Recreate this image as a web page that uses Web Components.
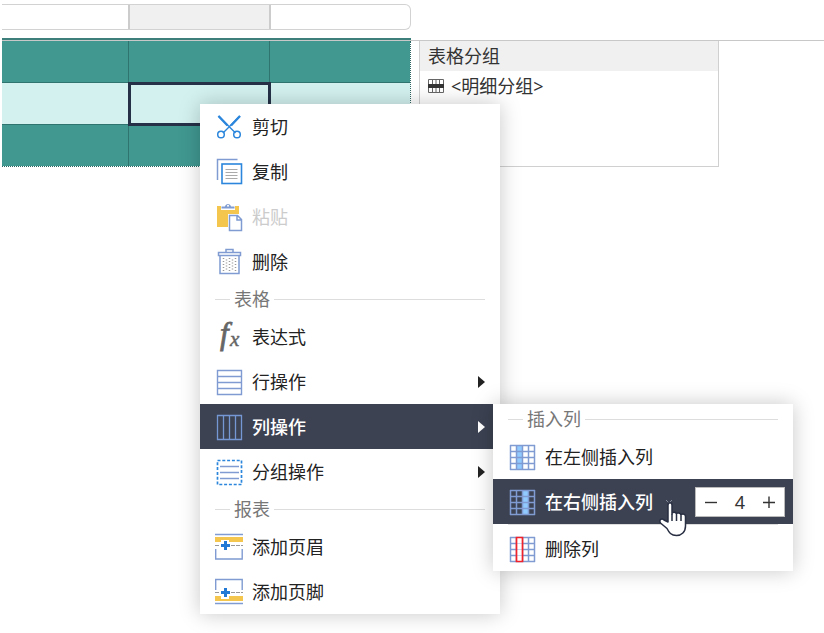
<!DOCTYPE html>
<html lang="zh-CN">
<head>
<meta charset="utf-8">
<meta name="viewport" content="width=device-width, initial-scale=1">
<title>报表设计器</title>
<style>
    body {
        margin: 0;
        min-height: 100vh;
        overflow: hidden;
        background: #fff;
        color: #333;
        font-family: "Noto Sans", "Noto Sans CJK SC", sans-serif;
        font-size: 18px;
        line-height: 30px;
    }
</style>
</head>
<body>

<report-designer>
    <column-ruler slot="ruler"></column-ruler>
    <report-table slot="canvas"></report-table>
    <group-panel slot="canvas" label="表格分组">&lt;明细分组&gt;</group-panel>

    <context-menu slot="menu" class="main" aria-label="表格菜单">
        <menu-item icon="cut">剪切</menu-item>
        <menu-item icon="copy">复制</menu-item>
        <menu-item icon="paste" disabled>粘贴</menu-item>
        <menu-item icon="trash">删除</menu-item>
        <menu-heading>表格</menu-heading>
        <menu-item icon="fx">表达式</menu-item>
        <menu-item icon="rows" submenu>行操作</menu-item>
        <menu-item icon="columns" submenu active>列操作</menu-item>
        <menu-item icon="group" submenu>分组操作</menu-item>
        <menu-heading>报表</menu-heading>
        <menu-item icon="header">添加页眉</menu-item>
        <menu-item icon="footer">添加页脚</menu-item>
    </context-menu>

    <context-menu slot="menu" class="sub" aria-label="列操作">
        <menu-heading>插入列</menu-heading>
        <menu-item icon="insert-left">在左侧插入列</menu-item>
        <menu-item icon="insert-right" active>在右侧插入列<number-stepper slot="end" value="4"></number-stepper></menu-item>
        <menu-divider></menu-divider>
        <menu-item icon="delete-column">删除列</menu-item>
    </context-menu>

    <hand-pointer slot="menu"></hand-pointer>
</report-designer>

<script>
// All icons are drawn on a 28 x 28 grid
const grid = '<path d="M2.5 2v25M8.5 2v25M14.5 2v25M20.5 2v25M26.5 2v25M2 2.5h25M2 8.5h25M2 14.5h25M2 20.5h25M2 26.5h25" stroke="#7f9bd1" stroke-width="1.5"/>';

const icons = {
    'cut': `<g stroke="#2b86dc"><path d="M3.5 3l17 17M25 3L8 20" stroke-width="1.4"/><path d="M3.5 3l9 9.5M25 3l-9 9.5" stroke-width="2.4"/><circle cx="6" cy="21.5" r="3.3" stroke-width="1.5"/><circle cx="22" cy="21.5" r="3.3" stroke-width="1.5"/></g>`,
    'copy': `<path d="M2.5 22V1.5h20" stroke="#7f9bd1" stroke-width="1.5"/><rect x="7" y="6" width="19.5" height="19.5" stroke="#2b86dc" stroke-width="1.6"/><path d="M10.5 11.5h12M10.5 14.5h12M10.5 17.5h12M10.5 20.5h12" stroke="#aaa"/>`,
    'paste': `<path d="M2 3h4v4h14V3h4v8H13v13H2z" fill="#f4c64d"/><path d="M6.5 5.5v-2H10C10.5 0 15.5 0 16 3.5h3.5v2z" fill="#7f9bd1"/><circle cx="13" cy="2.7" r="1" fill="#fff"/><path d="M14.5 12.5h8l4 4v11h-12zM22 12.5V17h4.5" fill="#fff" stroke="#7f9bd1" stroke-width="1.5"/>`,
    'trash': `<g stroke="#7f9bd1" stroke-width="1.5"><path d="M11 4V1.5h7V4M3.5 4.5h22v3h-22zM5 8v17.5h19V8"/></g><path d="M8.5 10v14M14.5 10v14M20.5 10v14" stroke="#999" stroke-width="1.5" stroke-dasharray="1 2"/><path d="M11.5 11.5v12M17.5 11.5v12" stroke="#999" stroke-width="1.5" stroke-dasharray="1 2"/>`,
    'fx': `<g fill="#666" stroke="#666" font-family="Liberation Serif, serif" font-style="italic"><text x="5" y="21" font-size="31" stroke-width=".8">f</text><text x="15" y="23" font-size="21" stroke-width=".5">x</text></g>`,
    'rows': `<path d="M2.5 2.5h24v24h-24zM2 8.5h24M2 14.5h24M2 20.5h24" stroke="#7f9bd1" stroke-width="1.4"/>`,
    'columns': `<path d="M2.5 2.5h24v24h-24zM8.5 3v24M14.5 3v24M20.5 3v24" stroke="#7597d3" stroke-width="1.3"/>`,
    'group': `<rect x="2.5" y="2.5" width="24" height="24" stroke="#2b86dc" stroke-width="1.7" stroke-dasharray="3 1.8"/><path d="M5 8.5h19M5 14.5h19M5 20.5h19" stroke="#7f9bd1" stroke-width="1.4"/>`,
    'header': `<path d="M0 1.5h28" stroke="#7f9bd1" stroke-width="1.5"/><path d="M0 4h28v5H14V7H6v2H0z" fill="#f4c64d"/><path d="M.7 16v10h26.5V16" stroke="#7f9bd1" stroke-width="1.4"/><path d="M0 12.5h5M16 12.5h12" stroke="#999" stroke-dasharray="4 1"/><path d="M10.5 8v9M6 12.5h9" stroke="#2179d5" stroke-width="3"/>`,
    'footer': `<path d="M.7 12V1.5h26.5V12" stroke="#7f9bd1" stroke-width="1.4"/><path d="M0 14.5h5M16 14.5h12" stroke="#999" stroke-dasharray="4 1"/><path d="M0 18h6v3h8v-3h14v5H0z" fill="#f4c64d"/><path d="M0 25.5h28" stroke="#7f9bd1" stroke-width="1.5"/><path d="M10.5 10v9M6 14.5h9" stroke="#2179d5" stroke-width="3"/>`,
    'insert-left': `<path d="M8.5 2.5h6v24h-6z" fill="#90caff"/>${grid}`,
    'insert-right': `<path d="M14.5 2.5h6v24h-6z" fill="#90caff"/>${grid}`,
    'delete-column': `${grid}<path d="M8.5 2.5h6v24h-6z" fill="#fff"/><path d="M9 8.5h5M9 14.5h5M9 20.5h5" stroke="#c9d5ec"/><path d="M8.5 2.5h6v24h-6z" stroke="#f0222a" stroke-width="1.7"/>`
};

// Attaches an open shadow root with the given markup
function render(element, html) {
    element.attachShadow({ mode: 'open' }).innerHTML = html;
}

class ReportDesigner extends HTMLElement {
    constructor() {
        super();
        render(this, `
            <style>
                :host { display: block; position: relative; min-height: 100vh; }
                .ruler { padding: 4px 0 8px 2px; }
                /* Edge of the table that sticks out above the page line */
                .edge { width: 409px; height: 2px; margin-left: 2px; background: #3c7f7b; }
                .canvas {
                    display: flex;
                    align-items: flex-start;
                    gap: 8px;
                    margin-left: 2px;
                    border-top: 1px solid #c8c8c8;
                }
            </style>
            <div class="ruler"><slot name="ruler"></slot></div>
            <div class="edge"></div>
            <main class="canvas"><slot name="canvas"></slot></main>
            <slot name="menu"></slot>
        `);
    }
}

class ColumnRuler extends HTMLElement {
    constructor() {
        super();
        render(this, `
            <style>
                :host {
                    display: grid;
                    grid-template-columns: 126px 143px 139px;
                    box-sizing: border-box;
                    width: 409px;
                    height: 26px;
                    border: 1px solid #d2d2d2;
                    border-left: none;
                    border-radius: 0 6px 6px 0;
                }
                .current { background: #f0f0f0; border: solid #ccc; border-width: 0 2px; }
            </style>
            <div></div><div class="current"></div><div></div>
        `);
    }
}

class ReportTable extends HTMLElement {
    constructor() {
        super();
        const row = '<td></td><td></td><td></td>';
        render(this, `
            <style>
                :host { display: block; flex: none; }
                table {
                    width: 409px;
                    table-layout: fixed;
                    border-spacing: 0;
                    border: 1px dotted #2c6561;
                    border-width: 0 1px 1px 0;
                }
                col:first-child { width: 127px; }
                td {
                    box-sizing: border-box;
                    height: 42px;
                    padding: 0;
                    background: #409891;
                    border: solid #2f746f;
                    border-width: 0 1px 1px 0;
                }
                td:last-child { border-right: none; }
                tr:last-child td { height: 41px; border-bottom: none; }
                .detail td { background: #d3f1ef; }
                .detail td.selected { outline: 3px solid #263148; outline-offset: -2px; }
            </style>
            <table aria-label="报表">
                <colgroup><col><col><col></colgroup>
                <tr>${row}</tr>
                <tr class="detail"><td></td><td class="selected"></td><td></td></tr>
                <tr>${row}</tr>
            </table>
        `);
    }
}

class GroupPanel extends HTMLElement {
    constructor() {
        super();
        render(this, `
            <style>
                :host {
                    display: block;
                    box-sizing: border-box;
                    flex: 0 1 300px;
                    height: 126px;
                    border: 1px solid #d0d0d0;
                    border-top: none;
                }
                header { padding-left: 8px; background: #f0f0f0; }
                .row { display: flex; align-items: center; gap: 7px; padding-left: 8px; }
            </style>
            <header>${this.getAttribute('label')}</header>
            <div class="row">
                <svg width="16" height="16" viewBox="0 0 16 16" fill="none" aria-hidden="true">
                    <path d="M.5 1.5h15v13H.5zM4.5 1v13M8 1v13M11.5 1v13" stroke="#666"/>
                    <path d="M0 6h16v4H0z" fill="#333"/>
                </svg>
                <span><slot></slot></span>
            </div>
        `);
    }
}

class ContextMenu extends HTMLElement {
    constructor() {
        super();
        render(this, `
            <style>
                :host {
                    display: block;
                    position: absolute;
                    width: 300px;
                    background: #fff;
                    box-shadow: 0 0 20px rgba(0, 0, 0, .22);
                }
                :host(.main) { left: 200px; top: 104px; }
                :host(.sub) { left: 493px; top: 404px; }
            </style>
            <slot></slot>
        `);
        this.setAttribute('role', 'menu');
    }
}

class MenuHeading extends HTMLElement {
    constructor() {
        super();
        render(this, `
            <style>
                :host { display: flex; align-items: center; gap: 4px; padding: 0 15px; color: #777; }
                :host::before, :host::after { content: ""; height: 1px; background: #ddd; }
                :host::before { width: 15px; }
                :host::after { flex: 1; }
            </style>
            <slot></slot>
        `);
    }
}

class MenuDivider extends HTMLElement {
    constructor() {
        super();
        render(this, `
            <style>:host { display: block; height: 1px; margin: 0 15px 1px; background: #ddd; }</style>
        `);
    }
}

class MenuItem extends HTMLElement {
    constructor() {
        super();
        const disabled = this.hasAttribute('disabled') ? 'disabled' : '';
        const arrow = this.hasAttribute('submenu')
            ? '<svg class="arrow" width="7" height="12" viewBox="0 0 7 12" aria-hidden="true"><path d="M0 0l7 6-7 6z" fill="currentColor"/></svg>'
            : '';
        render(this, `
            <style>
                :host { display: flex; align-items: center; height: 45px; color: #222; }
                :host([active]) { background: #3c4252; color: #fff; }
                :host([disabled]) { color: #ccc; }
                button {
                    display: flex;
                    align-items: center;
                    gap: 9px;
                    flex: 1;
                    height: 100%;
                    padding: 0 15px;
                    border: none;
                    background: none;
                    color: inherit;
                    font: inherit;
                    text-align: left;
                }
                :host([active]) button { font-weight: 500; }
                .icon { flex: none; overflow: visible; }
                .arrow { margin-left: auto; }
            </style>
            <button type="button" role="menuitem" ${disabled}>
                <svg class="icon" width="28" height="28" viewBox="0 0 28 28" fill="none" aria-hidden="true">${icons[this.getAttribute('icon')]}</svg>
                <span><slot></slot></span>
                ${arrow}
            </button>
            <slot name="end"></slot>
        `);
    }
}

class NumberStepper extends HTMLElement {
    constructor() {
        super();
        render(this, `
            <style>
                :host {
                    display: flex;
                    box-sizing: border-box;
                    width: 90px;
                    height: 30px;
                    margin-right: 8px;
                    border: 1px solid #bbb;
                    background: #fff;
                    color: #333;
                }
                button, input {
                    flex: 1;
                    min-width: 0;
                    padding: 0;
                    border: none;
                    background: none;
                    color: inherit;
                    font: inherit;
                    text-align: center;
                }
                button { display: flex; align-items: center; justify-content: center; }
            </style>
            <button type="button" class="minus" aria-label="减少"><svg width="12" height="12" viewBox="0 0 12 12"><path d="M0 6.5h12" stroke="currentColor" stroke-width="1.4"/></svg></button>
            <input type="text" inputmode="numeric" aria-label="列数" value="${this.getAttribute('value')}">
            <button type="button" class="plus" aria-label="增加"><svg width="12" height="12" viewBox="0 0 12 12"><path d="M0 6.5h12M6 .5v12" stroke="currentColor" stroke-width="1.4"/></svg></button>
        `);
        this.input = this.shadowRoot.querySelector('input');
        this.shadowRoot.querySelector('.minus').addEventListener('click', () => this.step(-1));
        this.shadowRoot.querySelector('.plus').addEventListener('click', () => this.step(1));
    }

    step(amount) {
        this.input.value = Math.max(1, (parseInt(this.input.value) || 0) + amount);
    }
}

class HandPointer extends HTMLElement {
    constructor() {
        super();
        render(this, `
            <style>
                :host { display: block; position: absolute; left: 658px; top: 498px; pointer-events: none; }
                svg { display: block; }
            </style>
            <svg width="30" height="40" viewBox="0 0 30 40" aria-hidden="true">
                <path d="M8 2l3 3 3-3" fill="none" stroke="#858a98"/>
                <path d="M10 24V7c0-3 4-3 4 0v9c0-2.5 4.5-2.5 4.5.5 0-2.5 4.5-2 4.5 1 0-2 4.5-2 4.5 1V28c0 6-4 9.5-9 9.5-5.5 0-7.5-3-9.5-7L2.500 25C.5 21.5 4 20 6 22z" fill="#fff" stroke="#292f42" stroke-width="1.5" stroke-linejoin="round"/>
                <path d="M14 16v7M18.5 17v6M23 18v5" stroke="#292f42" stroke-width="1.5"/>
            </svg>
        `);
    }
}

customElements.define('report-designer', ReportDesigner);
customElements.define('column-ruler', ColumnRuler);
customElements.define('report-table', ReportTable);
customElements.define('group-panel', GroupPanel);
customElements.define('context-menu', ContextMenu);
customElements.define('menu-heading', MenuHeading);
customElements.define('menu-divider', MenuDivider);
customElements.define('menu-item', MenuItem);
customElements.define('number-stepper', NumberStepper);
customElements.define('hand-pointer', HandPointer);
</script>
</body>
</html>
